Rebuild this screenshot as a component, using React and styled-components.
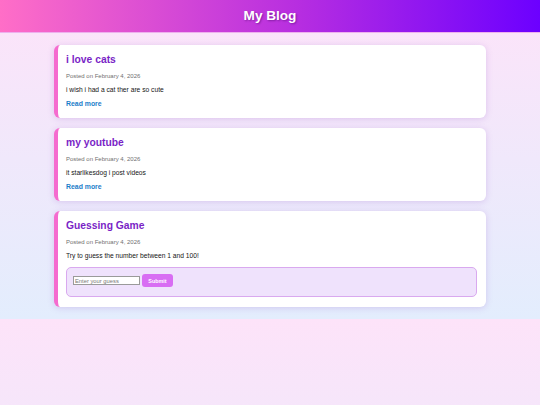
import React from "react";
import styled, { createGlobalStyle } from "styled-components";

const GlobalStyle = createGlobalStyle`
  body {
    margin: 0;
    font-family: "Liberation Sans", Arial, sans-serif;
    background: linear-gradient(180deg, #fde3f9 0%, #e3edfd 100%);
    color: #222;
  }
`;

const Header = styled.header`
  background: linear-gradient(90deg, #ff6ec7 0%, #b72ee0 55%, #6c00ff 100%);
  border-bottom: 1px solid #eeb0ee;
  padding: 8px 0;
  text-align: center;
`;

const Title = styled.h1`
  margin: 0;
  font-size: 13.6px;
  line-height: 16px;
  font-weight: bold;
  color: #fff;
  text-shadow: 1px 1px 2px rgba(60, 0, 90, 0.45);
`;

const Main = styled.main`
  width: 80%;
  margin: 0 auto;
  padding: 12px 0;
  display: flex;
  flex-direction: column;
  gap: 10px;
`;

const Card = styled.article`
  background: #fff;
  border-left: 4px solid #f56bcf;
  border-radius: 6px;
  padding: 8px 9px 10px 8px;
  box-shadow: 0 1px 6px rgba(150, 90, 200, 0.25);
`;

const PostTitle = styled.h2`
  margin: 0;
  padding-top: 1px;
  font-size: 10.3px;
  line-height: 12px;
  font-weight: bold;
  color: #7a1fc6;
`;

const Meta = styled.p`
  margin: 7px 0 0;
  font-size: 6px;
  line-height: 7px;
  color: #707070;
`;

const Body = styled.p`
  margin: 6px 0 0;
  font-size: 6.7px;
  line-height: 8px;
  color: #151515;
`;

const ReadMore = styled.a`
  display: block;
  margin-top: 6px;
  font-size: 6.9px;
  line-height: 8px;
  font-weight: bold;
  color: #1b7dc9;
  text-decoration: none;
`;

const GameBox = styled.div`
  margin-top: 7px;
  background: #efe2fc;
  border: 1px solid #d9a9ef;
  border-radius: 5px;
  padding: 6px 6px 9px;
  display: flex;
  align-items: center;
  gap: 2px;
`;

const GuessInput = styled.input`
  box-sizing: border-box;
  width: 67px;
  height: 9px;
  margin: 0;
  padding: 0 1px;
  border: 1px solid #9a9a9a;
  background: #fff;
  font-family: inherit;
  font-size: 5.8px;
  &::placeholder {
    color: #777;
  }
`;

const SubmitButton = styled.button`
  width: 31px;
  height: 13px;
  padding: 0;
  border: none;
  border-radius: 3px;
  background: #d86df3;
  color: #fff;
  font-family: inherit;
  font-size: 5.4px;
  font-weight: bold;
`;

const posts = [
  { title: "i love cats", body: "i wish i had a cat ther are so cute" },
  { title: "my youtube", body: "it starlikesdog i post videos" },
];

const date = "Posted on February 4, 2026";

export default function App() {
  return (
    <>
      <GlobalStyle />
      <Header>
        <Title>My Blog</Title>
      </Header>
      <Main>
        {posts.map((post) => (
          <Card key={post.title}>
            <PostTitle>{post.title}</PostTitle>
            <Meta>{date}</Meta>
            <Body>{post.body}</Body>
            <ReadMore href="#">Read more</ReadMore>
          </Card>
        ))}
        <Card>
          <PostTitle>Guessing Game</PostTitle>
          <Meta>{date}</Meta>
          <Body>Try to guess the number between 1 and 100!</Body>
          <GameBox>
            <GuessInput type="number" placeholder="Enter your guess" />
            <SubmitButton>Submit</SubmitButton>
          </GameBox>
        </Card>
      </Main>
    </>
  );
}
